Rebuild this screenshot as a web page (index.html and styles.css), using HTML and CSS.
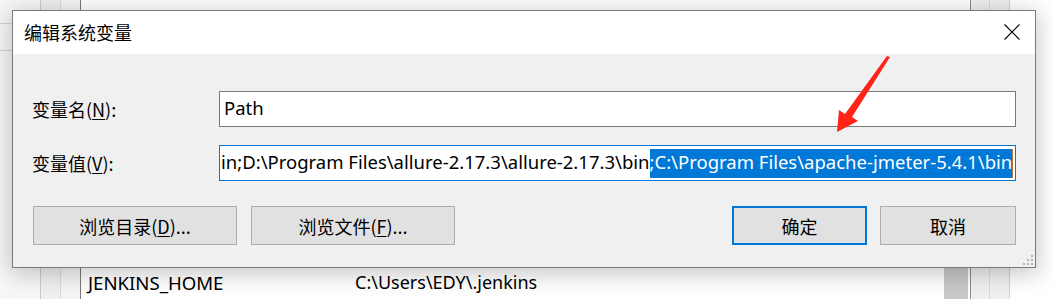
FILE: index.html
```html
<!DOCTYPE html>
<html lang="zh-CN">
<head>
<meta charset="utf-8">
<title>编辑系统变量</title>
<link rel="stylesheet" href="styles.css">
</head>
<body>
<div class="backdrop">
  <div class="col c1"><div class="cell first"></div><div class="cell"></div></div>
  <div class="col c2"></div>
  <div class="col c3"></div>
  <div class="col main">
    <div class="envrow"><span class="k">JENKINS_HOME</span><span class="v">C:\Users\EDY\.jenkins</span></div>
  </div>
  <div class="col thumb"><div class="thumb-bar"></div></div>
  <div class="col gap2"></div>
  <div class="col r1"></div>
  <div class="col r2"></div>
  <div class="col r3"></div>
</div>

<div class="dialog">
  <div class="titlebar">
    <span class="title">编辑系统变量</span>
    <span class="close">
      <svg width="16" height="16" viewBox="0 0 16 16"><path d="M0.5 0.5 L15.5 15.5 M15.5 0.5 L0.5 15.5" stroke="#000" stroke-width="1.1" fill="none"/></svg>
    </span>
  </div>
  <div class="body">
    <div class="field">
      <label class="label">变量名(<u>N</u>):</label>
      <div class="input">Path</div>
    </div>
    <div class="field second">
      <label class="label">变量值(<u>V</u>):</label>
      <div class="input focused"><span class="plain">in;D:\Program Files\allure-2.17.3\allure-2.17.3\bin</span><span class="sel">;C:\Program Files\apache-jmeter-5.4.1\bin</span><span class="caret"></span></div>
    </div>
    <div class="buttons">
      <button class="btn wide">浏览目录(<u>D</u>)...</button>
      <button class="btn wide">浏览文件(<u>F</u>)...</button>
      <span class="spacer"></span>
      <button class="btn narrow default">确定</button>
      <button class="btn narrow">取消</button>
    </div>
  </div>
  <div class="grip">
    <i></i><i></i><i></i>
    <i></i><i></i><i></i>
  </div>
</div>

<svg class="arrow" width="1053" height="299" viewBox="0 0 1053 299">
  <path d="M890 57 L852 117 L858 121 L837 132 L839 110 L845 114 L887 56 Z" fill="#ff2318"/>
</svg>
</body>
</html>
```
FILE: styles.css
```css
* { box-sizing: border-box; }
html, body { margin: 0; padding: 0; }
body {
  width: 1053px;
  height: 299px;
  overflow: hidden;
  position: relative;
  background: #ffffff;
  font-family: "Noto Sans", "Noto Sans CJK SC", sans-serif;
  color: #000;
}

/* window behind the dialog */
.backdrop {
  display: flex;
  height: 299px;
  width: 1053px;
}
.col { height: 100%; flex-shrink: 0; }
.c1 { width: 40px; background: #f7f7f7; }
.c1 .cell { border-bottom: 1px solid #d5d5d5; height: 27px; }
.c1 .cell.first { height: 24px; }
.c2 { width: 20px; border-left: 1px solid #cacaca; background: #f0f0f0; }
.c3 { width: 20px; border-left: 1px solid #dadada; background: #f5f5f5; }
.main {
  width: 864px;
  border-left: 1px solid #7a7a7a;
  background: #fff;
  display: flex;
  flex-direction: column;
  justify-content: flex-end;
}
.envrow {
  height: 30px;
  display: flex;
  align-items: center;
  padding-left: 7px;
  padding-bottom: 4px;
  font-size: 18px;
  white-space: nowrap;
}
.envrow .k { width: 267px; font-size: 18.6px; }
.thumb { width: 24px; display: flex; flex-direction: column; justify-content: flex-end; }
.thumb-bar { height: 120px; background: #c8c8c8; }
.gap2 { width: 2px; }
.r1 { width: 19px; border-left: 1px solid #8a8a8a; background: #f0f0f0; }
.r2 { width: 20px; border-left: 1px solid #dadada; background: #f0f0f0; }
.r3 { flex: 1; flex-shrink: 1; border-left: 1px solid #cfcfcf; background: #fff; }

/* dialog */
.dialog {
  position: absolute;
  left: 12px;
  top: 10px;
  width: 1024px;
  height: 258px;
  border: 1px solid #7a7a7a;
  background: #f0f0f0;
  box-shadow: 0 4px 22px 2px rgba(0, 0, 0, 0.22);
  display: flex;
  flex-direction: column;
}
.titlebar {
  height: 43px;
  background: #fff;
  display: flex;
  align-items: center;
  padding-left: 11px;
}
.title {
  flex: 1;
  font-family: "Noto Sans CJK SC", sans-serif;
  font-size: 18px;
  margin-top: -1px;
}
.close {
  width: 46px;
  height: 43px;
  display: flex;
  align-items: center;
  justify-content: center;
}
.close svg { display: block; margin-top: -2px; }

.body {
  flex: 1;
  display: flex;
  flex-direction: column;
  padding: 37px 19px 22px 19px;
}
.field {
  display: flex;
  align-items: center;
  height: 36px;
}
.field.second { margin-top: 18px; }
.label {
  width: 187px;
  font-size: 18px;
  font-family: "Noto Sans CJK SC", sans-serif;
}
.label u, .btn u { text-underline-offset: 2px; }
.input {
  flex: 1;
  height: 36px;
  background: #fff;
  border: 1px solid #7a7a7a;
  display: flex;
  align-items: center;
  padding-left: 4px;
  padding-bottom: 3px;
  font-size: 18.5px;
  white-space: nowrap;
  overflow: hidden;
}
.input.focused {
  border-color: #0078d7;
  padding-left: 1px;
  padding-bottom: 0;
}
.plain, .sel {
  line-height: 25px;
  padding-bottom: 4px;
  height: 29px;
  display: inline-block;
}
.sel { background: #0078d7; color: #fff; }
.caret { width: 1px; height: 29px; background: #b8783a; }

.buttons {
  margin-top: 25px;
  height: 39px;
  display: flex;
  padding-left: 1px;
}
.btn {
  height: 39px;
  background: #e1e1e1;
  border: 1px solid #adadad;
  font-family: "Noto Sans CJK SC", sans-serif;
  font-size: 18px;
  color: #000;
  padding: 0;
  margin: 0;
}
.btn.wide { width: 204px; margin-right: 14px; }
.btn.narrow { width: 135px; }
.btn.default { border: 2px solid #0078d7; margin-right: 13px; }
.btn + .btn.narrow { width: 136px; }
.spacer { flex: 1; }

.grip {
  position: absolute;
  right: 2px;
  bottom: 2px;
  width: 10px;
  height: 10px;
  display: grid;
  grid-template-columns: repeat(3, 2px);
  grid-template-rows: repeat(3, 2px);
  gap: 2px;
}
.grip i { background: #b5b5b5; display: block; }
.grip i:nth-child(1) { grid-column: 3; grid-row: 1; }
.grip i:nth-child(2) { grid-column: 2; grid-row: 2; }
.grip i:nth-child(3) { grid-column: 3; grid-row: 2; }
.grip i:nth-child(4) { grid-column: 1; grid-row: 3; }
.grip i:nth-child(5) { grid-column: 2; grid-row: 3; }
.grip i:nth-child(6) { grid-column: 3; grid-row: 3; }

.arrow {
  position: absolute;
  left: 0;
  top: 0;
  pointer-events: none;
}
```
